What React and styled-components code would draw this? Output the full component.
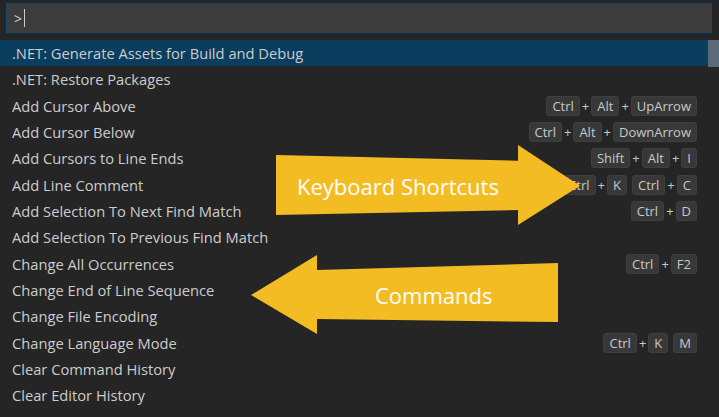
import React from 'react';
import styled, { createGlobalStyle } from 'styled-components';

const GlobalStyle = createGlobalStyle`
    body {
        margin: 0;
        background-color: #252526;
        font-family: "Open Sans", "Noto Sans", sans-serif;
    }
`

const Palette = styled.div`
    position: relative;
    width: 719px;
    height: 417px;
    overflow: hidden;
    background-color: #252526;
`
const InputRow = styled.div`
    padding: 3px 7px 0 6px;
`
const InputBox = styled.div`
    display: flex;
    align-items: center;
    height: 28px;
    padding: 0 7px;
    background-color: #3c3c3c;
    border: solid 1px #0e4a72;
    color: #cccccc;
    font-size: 14px;
`
const Caret = styled.span`
    width: 1px;
    height: 18px;
    margin-left: 2px;
    background-color: #cccccc;
`
const List = styled.div`
    position: relative;
    margin-top: 6.5px;
`
const Row = styled.div`
    display: flex;
    align-items: center;
    justify-content: space-between;
    height: 26.33px;
    padding: 1px 22px 0 12px;
    box-sizing: border-box;
    background-color: ${props => props.selected ? '#0a3d5e' : 'transparent'};
    color: #cccccc;
    font-size: 14.7px;
`
const Label = styled.span`
    white-space: nowrap;
`
const Keys = styled.div`
    display: flex;
    align-items: center;
    gap: 5px;
`
const Chord = styled.div`
    display: flex;
    align-items: center;
`
const Key = styled.span`
    display: inline-flex;
    align-items: center;
    height: 20px;
    padding: 0 5px;
    background-color: #383838;
    border: solid 1px #3f3f3f;
    border-radius: 3px;
    box-sizing: border-box;
    font-size: 13px;
    color: #c8c8c8;
`
const Plus = styled.span`
    margin: 0 2px;
    font-size: 13px;
    color: #c8c8c8;
`
const ScrollThumb = styled.div`
    position: absolute;
    right: 0;
    top: 0;
    width: 11px;
    height: 27px;
    background-color: #5a6a78;
`
const Callout = styled.div`
    position: absolute;
    left: ${props => props.x}px;
    top: ${props => props.y}px;
    width: ${props => props.w}px;
    height: ${props => props.h}px;
`
const CalloutText = styled.span`
    position: absolute;
    left: ${props => props.x}px;
    top: 0;
    height: 100%;
    display: flex;
    align-items: center;
    color: #ffffff;
    font-size: 22px;
    white-space: nowrap;
`

const commands = [
    { label: '.NET: Generate Assets for Build and Debug', selected: true },
    { label: '.NET: Restore Packages' },
    { label: 'Add Cursor Above', keys: [['Ctrl', 'Alt', 'UpArrow']] },
    { label: 'Add Cursor Below', keys: [['Ctrl', 'Alt', 'DownArrow']] },
    { label: 'Add Cursors to Line Ends', keys: [['Shift', 'Alt', 'I']] },
    { label: 'Add Line Comment', keys: [['Ctrl', 'K'], ['Ctrl', 'C']] },
    { label: 'Add Selection To Next Find Match', keys: [['Ctrl', 'D']] },
    { label: 'Add Selection To Previous Find Match' },
    { label: 'Change All Occurrences', keys: [['Ctrl', 'F2']] },
    { label: 'Change End of Line Sequence' },
    { label: 'Change File Encoding' },
    { label: 'Change Language Mode', keys: [['Ctrl', 'K'], ['M']] },
    { label: 'Clear Command History' },
    { label: 'Clear Editor History' },
];

const Keybinding = ({ chords }) => (
    <Keys>
        {chords.map((chord, i) => (
            <Chord key={i}>
                {chord.map((k, j) => (
                    <React.Fragment key={k + j}>
                        {j > 0 && <Plus>+</Plus>}
                        <Key>{k}</Key>
                    </React.Fragment>
                ))}
            </Chord>
        ))}
    </Keys>
);

const App = () => {
    return (
        <Palette>
            <GlobalStyle />
            <InputRow>
                <InputBox>
                    &gt;<Caret />
                </InputBox>
            </InputRow>

            <List>
                {commands.map(c => (
                    <Row key={c.label} selected={c.selected}>
                        <Label>{c.label}</Label>
                        {c.keys && <Keybinding chords={c.keys} />}
                    </Row>
                ))}
                <ScrollThumb />
            </List>

            <Callout x={276} y={145} w={305} h={81}>
                <svg width="305" height="81" viewBox="0 0 305 81">
                    <polygon points="0,10 242,15.7 242,0 304,40.7 242,80 242,65 0,70" fill="#f4bc23" />
                </svg>
                <CalloutText x={21}>Keyboard Shortcuts</CalloutText>
            </Callout>

            <Callout x={251} y={255} w={308} h={80}>
                <svg width="308" height="80" viewBox="0 0 308 80">
                    <polygon points="0,40 66,0 66,15 307,8 307,67 66,64 66,79" fill="#f4bc23" />
                </svg>
                <CalloutText x={124}>Commands</CalloutText>
            </Callout>
        </Palette>
    );
};

export default App
